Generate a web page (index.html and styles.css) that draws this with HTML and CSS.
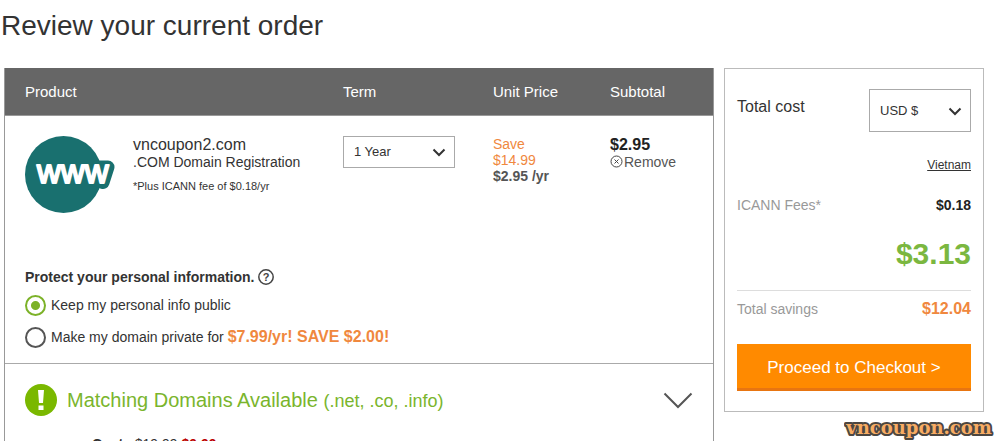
FILE: index.html
```html
<!DOCTYPE html>
<html lang="en">
<head>
<meta charset="utf-8">
<title>Review your current order</title>
<link rel="stylesheet" href="styles.css">
</head>
<body>
<h1 class="title">Review your current order</h1>
<main class="layout">
  <section class="order">
    <table class="items">
      <colgroup><col><col class="col-term"><col class="col-price"><col class="col-subtotal"></colgroup>
      <thead>
        <tr><th scope="col">Product</th><th scope="col">Term</th><th scope="col">Unit Price</th><th scope="col">Subtotal</th></tr>
      </thead>
      <tbody>
        <tr>
          <td>
            <div class="product">
              <svg class="product-logo" viewBox="0 0 92 78" aria-hidden="true">
                <circle cx="38.5" cy="38.5" r="38.5" fill="#19706f"/>
                <path d="M73 31h10L78 46.500 70 44z" fill="#19706f" stroke="#19706f" stroke-width="13" stroke-linejoin="round"/>
                <text class="logo-text" x="12" y="47">www</text>
              </svg>
              <div>
                <div class="domain">vncoupon2.com</div>
                <div class="kind">.COM Domain Registration</div>
                <div class="note">*Plus ICANN fee of $0.18/yr</div>
              </div>
            </div>
          </td>
          <td>
            <div class="select select-term">
              <select aria-label="Term"><option>1 Year</option></select>
              <svg viewBox="0 0 14 9" aria-hidden="true"><path d="M1.500 1.500 7 7l5.500-5.500"/></svg>
            </div>
          </td>
          <td class="price">
            <div class="save">Save<br>$14.99</div>
            <strong>$2.95 /yr</strong>
          </td>
          <td>
            <div class="subtotal">$2.95</div>
            <button class="remove" type="button">
              <svg viewBox="0 0 13 13" aria-hidden="true"><circle cx="6.500" cy="6.500" r="5.500"/><path d="m4.500 4.500 4 4m0-4-4 4"/></svg>Remove
            </button>
          </td>
        </tr>
      </tbody>
    </table>
    <fieldset class="privacy">
      <legend>Protect your personal information.
        <svg class="help" viewBox="0 0 16 16" aria-hidden="true"><circle cx="8" cy="8" r="7.200"/><text x="8" y="12">?</text></svg>
      </legend>
      <label><input type="radio" name="privacy" checked><span>Keep my personal info public</span></label>
      <label><input type="radio" name="privacy"><span>Make my domain private for <strong>$7.99/yr! SAVE $2.00!</strong></span></label>
    </fieldset>
    <div class="matching">
      <button class="matching-head" type="button">
        <svg class="alert" viewBox="0 0 32 32" aria-hidden="true"><circle cx="16" cy="16" r="16" fill="#7ab800"/><path d="M13 6h6l-1 13h-4zM13.500 21.500h5v4.500h-5z" fill="#fff"/></svg>
        <span class="matching-title">Matching Domains Available <small>(.net, .co, .info)</small></span>
        <svg class="expand" viewBox="0 0 30 17" aria-hidden="true"><path d="m1.500 1.500 13.500 13.500 13.500-13.500"/></svg>
      </button>
      <p class="offer"><strong>Costs</strong> <s>$19.99</s> <strong class="deal">$9.99</strong></p>
    </div>
  </section>
  <aside class="summary">
    <div class="row row-total">
      <label for="currency">Total cost</label>
      <div class="select select-currency">
        <select id="currency"><option>USD $</option></select>
        <svg viewBox="0 0 14 9" aria-hidden="true"><path d="M1.500 1.500 7 7l5.500-5.500"/></svg>
      </div>
    </div>
    <a class="country" href="#">Vietnam</a>
    <div class="row fees"><span>ICANN Fees*</span><strong>$0.18</strong></div>
    <div class="total">$3.13</div>
    <div class="row savings"><span>Total savings</span><strong>$12.04</strong></div>
    <button class="checkout" type="button">Proceed to Checkout &gt;</button>
  </aside>
</main>
<svg class="watermark" viewBox="0 0 150 28" role="img" aria-label="vncoupon.com"><text x="75" y="18">vncoupon.com</text></svg>
</body>
</html>
```

FILE: styles.css
```css
* { box-sizing: border-box; }
body {
  margin: 0;
  height: 100vh;
  overflow: hidden;
  position: relative;
  background: #fff;
  color: #333;
  font-family: "Liberation Sans", Arial, sans-serif;
  font-size: 14px;
  line-height: 16px;
}
button, select { font: inherit; color: inherit; }
.title { margin: 0; padding: 8px 1px 24px; font-size: 28px; line-height: 36px; font-weight: 400; }
.layout { display: flex; align-items: flex-start; gap: 10px; padding: 0 10px 0 4px; }
.order { flex: 1; border: 1px solid #999; border-top: 0; }
.items { width: 100%; table-layout: fixed; border-collapse: collapse; }
.col-term { width: 150px; }
.col-price { width: 117px; }
.col-subtotal { width: 103px; }
.items th { height: 47px; padding: 1px 0 0; background: #666; color: #fff; border-bottom: 1px solid #999; font-size: 15px; font-weight: 400; text-align: left; }
.items td { height: 146px; padding: 20px 0 0; vertical-align: top; }
.items th:first-child, .items td:first-child { padding-left: 20px; }
.product { display: flex; gap: 16px; }
.product-logo { width: 92px; height: 78px; }
.logo-text { fill: #fff; stroke: #fff; stroke-width: 2px; stroke-linejoin: round; font-family: "Liberation Sans", sans-serif; font-size: 33px; }
.domain { font-size: 16px; line-height: 17px; }
.kind { line-height: 18px; }
.note { margin-top: 8px; font-size: 11px; line-height: 14px; }
.select { position: relative; border: 1px solid #aaa; }
.select select { appearance: none; width: 100%; height: 100%; padding: 0 10px; border: 0; background: none; font-size: 13px; }
.select svg { position: absolute; right: 8px; top: 50%; width: 14px; height: 9px; margin-top: -4px; pointer-events: none; fill: none; stroke: #333; stroke-width: 2px; }
.select-term { width: 112px; height: 32px; }
.select-currency { width: 102px; height: 43px; }
.save { color: #f0883e; }
.price strong { color: #555; }
.subtotal { color: #222; font-size: 16px; font-weight: 700; line-height: 18px; }
.remove { display: flex; align-items: center; gap: 1px; padding: 0; border: 0; background: none; color: #555; }
.remove svg { width: 13px; height: 13px; fill: none; stroke: #444; }
.privacy { margin: 0; padding: 0 20px 10px; border: 0; border-bottom: 1px solid #aaa; }
.privacy legend { display: flex; align-items: center; gap: 4px; padding: 8px 0 4px; font-weight: 700; }
.help { width: 16px; height: 16px; fill: none; stroke: #444; stroke-width: 1.5px; }
.help text { fill: #444; stroke: none; font-size: 11px; text-anchor: middle; }
.privacy label { display: flex; align-items: center; gap: 5px; height: 32px; }
.privacy label strong { color: #f0883e; font-size: 16px; }
.privacy input { appearance: none; width: 21px; height: 21px; margin: 0; border: 2px solid #555; border-radius: 50%; }
.privacy input:checked { border-color: #7cb228; background: radial-gradient(#7cb228 4px, #fff 5px); }
.matching { padding: 20px; }
.matching-head { display: flex; align-items: center; gap: 10px; width: 100%; padding: 0; border: 0; background: none; color: #7ab52d; text-align: left; }
.alert { width: 32px; height: 32px; }
.matching-title { flex: 1; font-size: 20px; line-height: 24px; }
.matching-title small { font-size: 18px; }
.expand { width: 30px; height: 17px; fill: none; stroke: #555; stroke-width: 2px; }
.offer { margin: 20px 67px 0; }
.deal { color: #b00; }
.summary { width: 260px; padding: 20px 12px; border: 1px solid #bbb; }
.row { display: flex; justify-content: space-between; align-items: center; }
.row-total { align-items: flex-start; font-size: 16px; line-height: 36px; }
.country { display: block; margin-top: 26px; font-size: 12px; line-height: 14px; color: #333; text-align: right; }
.fees { margin-top: 25px; color: #999; }
.fees strong { color: #222; }
.total { margin-top: 22px; padding-bottom: 17px; border-bottom: 1px solid #ddd; color: #7bb740; font-size: 30px; font-weight: 700; line-height: 38px; text-align: right; }
.savings { margin-top: 10px; color: #999; }
.savings strong { color: #f0883e; font-size: 16px; }
.checkout { width: 100%; height: 47px; margin-top: 27px; padding: 3px 0 0; border: 0; border-bottom: 3px solid #e87511; background: #ff8a00; color: #fff; font-size: 17px; }
.watermark { position: absolute; right: 0; bottom: -3px; width: 150px; height: 28px; }
.watermark text { fill: #f8ac62; stroke: #4c4742; stroke-width: 4px; stroke-linejoin: round; paint-order: stroke; font-family: "DejaVu Serif", serif; font-size: 18px; font-weight: 700; text-anchor: middle; }
```
